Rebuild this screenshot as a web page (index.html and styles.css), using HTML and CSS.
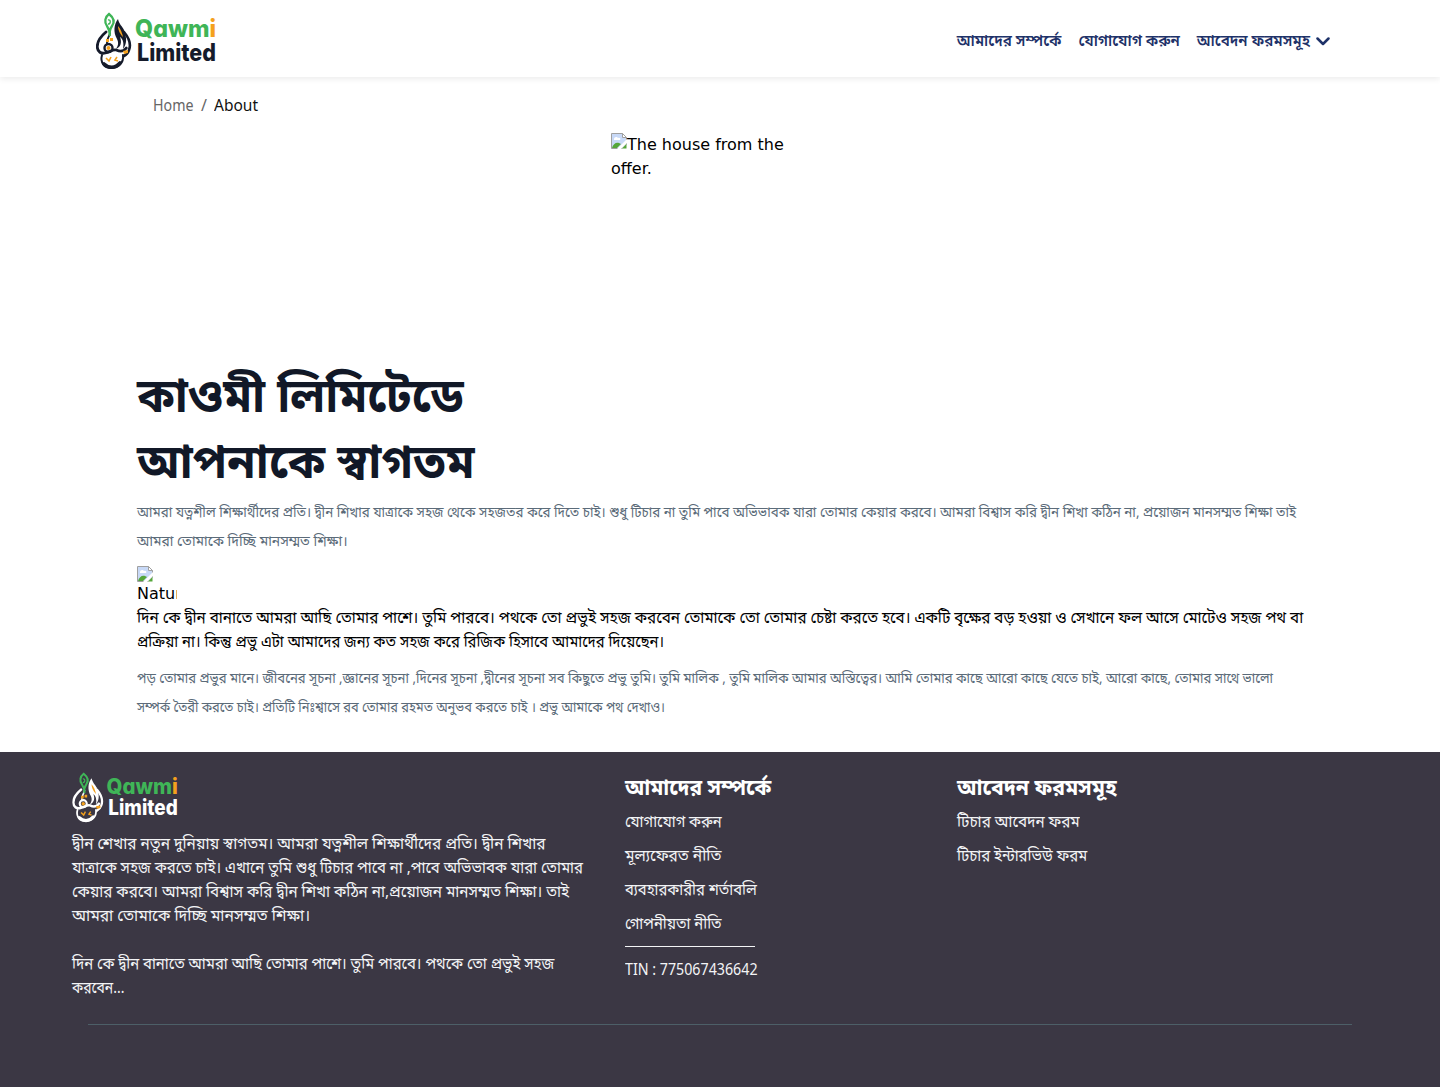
FILE: index.html
```html
<!DOCTYPE html>
<html lang="bn">
<head>
<meta charset="utf-8">
<title>About</title>
<link rel="stylesheet" href="styles.css">
</head>
<body>
<svg class="defs" aria-hidden="true">
  <symbol id="emblem" viewBox="0 0 36 58">
    <g fill="none" stroke="currentColor" stroke-linecap="round">
      <path d="M10 20C4 25 1 29 1.300 35c.2 5 4 7 8 6 5-1 7-4 11-3 4 2 7 2 10-2" stroke-width="2.800"/>
      <path d="M28 20c5 6 7 13 5 18-1 3-3 5-5 6" stroke-width="2.600"/>
      <path d="M14 21c-1 5-4 6-3 11" stroke-width="1.800"/>
      <path d="M6 43c-2 7 2 13 9 13s13-5 12-13" stroke-width="2"/>
      <path d="M8 52c4 4 11 5 16-1" stroke-width="3.600"/>
      <circle cx="12.500" cy="36" r="4" stroke-width="2.400"/>
    </g>
    <path d="M22 7c-4 5-5 13-1 20 2 4 1 7-1 10 5-2 6-7 4-12 3 2 4 6 3 12 4-5 4-12 1-17V18c-2-4-5-6-6-11z" fill="currentColor"/>
    <path d="M22 14c0 5 3 9 5 11-1-4-2-8-5-11z" fill="#f4a11d"/>
    <path d="M14 24c0-4-1-7-3-10-3-4-2-9 2-12 5 4 6 8 3 12-2 3-3 6-2 10z" fill="none" stroke="#3fb557" stroke-width="2.300"/>
    <path d="M12 8c3-1 3 4 0 4" fill="none" stroke="#3fb557" stroke-width="1.400"/>
    <path d="M10 27h3v3h-3zm4-1h3v3h-3zM27 39l5-1v3l-4 1z" fill="#f4a11d"/>
    <circle cx="12.500" cy="36" r="2" fill="#f4a11d"/>
    <path d="M10 46l3 3 2-4M21 45l-2 3 3 1" fill="none" stroke="#f4a11d" stroke-width="1.600"/>
  </symbol>
  <symbol id="broken" viewBox="0 0 16 16">
    <path d="M.5.500h11l4 4V11L11 15.500H.5z" fill="#c8d9f7" stroke="#a0a0a0"/>
    <path d="M3 6c0-2 3-3 4-1 2-1 3 1 2 2H3z" fill="#fff"/>
    <path d="M1 15c1-4 4-6 7-5l2 1-4 4z" fill="#55a63a"/>
    <path d="M16 6v4l-6 6H6z" fill="#fff"/>
    <path d="M11.500.500v4h4z" fill="#fff" stroke="#a0a0a0"/>
    <path d="M11 15.500h4.500V11z" fill="#55a63a"/>
  </symbol>
</svg>
<header class="header">
  <svg class="logo" viewBox="0 0 120 58">
    <use href="#emblem" width="36" height="58"/>
    <text x="39" y="25" class="logo-top" textLength="81" lengthAdjust="spacingAndGlyphs">Qawm<tspan class="accent">i</tspan></text>
    <text x="41" y="49" class="logo-bottom" textLength="79" lengthAdjust="spacingAndGlyphs">Limited</text>
  </svg>
  <nav class="nav">
    <a>আমাদের সম্পর্কে</a><a>যোগাযোগ করুন</a><a>আবেদন ফরমসমূহ</a>
    <svg class="chevron" viewBox="0 0 14 9"><path d="M1.500 1.500 7 7l5.500-5.500"/></svg>
  </nav>
</header>
<div class="crumbs"><span class="home line w89">Home</span><span class="slash">/</span><b class="line w97">About</b></div>
<main class="main">
  <div class="hero"><svg class="broken"><use href="#broken"/></svg>The house from the offer.</div>
  <h1 class="title"><span class="line w965">কাওমী লিমিটেডে</span><span class="line w965">আপনাকে স্বাগতম</span></h1>
  <p class="muted"><span class="line w955">আমরা যত্নশীল শিক্ষার্থীদের প্রতি। দ্বীন শিখার যাত্রাকে সহজ থেকে সহজতর করে দিতে চাই। শুধু টিচার না তুমি পাবে অভিভাবক যারা তোমার কেয়ার করবে। আমরা বিশ্বাস করি দ্বীন শিখা কঠিন না, প্রয়োজন মানসম্মত শিক্ষা তাই</span><span class="line w99">আমরা তোমাকে দিচ্ছি মানসম্মত শিক্ষা।</span></p>
  <div class="avatar"><svg class="broken"><use href="#broken"/></svg><span>Nature</span></div>
  <p class="body"><span class="line w953">দিন কে দ্বীন বানাতে আমরা আছি তোমার পাশে। তুমি পারবে। পথকে তো প্রভুই সহজ করবেন তোমাকে তো তোমার চেষ্টা করতে হবে। একটি বৃক্ষের বড় হওয়া ও সেখানে ফল আসে মোটেও সহজ পথ বা</span><span class="line w926">প্রক্রিয়া না। কিন্তু প্রভু এটা আমাদের জন্য কত সহজ করে রিজিক হিসাবে আমাদের দিয়েছেন।</span></p>
  <p class="muted"><span class="line w938">পড় তোমার প্রভুর মানে। জীবনের সূচনা ,জ্ঞানের সূচনা ,দিনের সূচনা ,দ্বীনের সূচনা সব কিছুতে প্রভু তুমি। তুমি মালিক , তুমি মালিক আমার অস্তিত্বের। আমি তোমার কাছে আরো কাছে যেতে চাই, আরো কাছে, তোমার সাথে ভালো</span><span class="line w918">সম্পর্ক তৈরী করতে চাই। প্রতিটি নিঃশ্বাসে রব তোমার রহমত অনুভব করতে চাই । প্রভু আমাকে পথ দেখাও।</span></p>
</main>
<footer class="footer">
  <div class="columns">
    <section class="about">
      <svg class="logo small" viewBox="0 0 120 58">
        <use href="#emblem" width="36" height="58"/>
        <text x="39" y="25" class="logo-top" textLength="81" lengthAdjust="spacingAndGlyphs">Qawm<tspan class="accent">i</tspan></text>
        <text x="41" y="49" class="logo-bottom" textLength="79" lengthAdjust="spacingAndGlyphs">Limited</text>
      </svg>
      <p><span class="line w963">দ্বীন শেখার নতুন দুনিয়ায় স্বাগতম। আমরা যত্নশীল শিক্ষার্থীদের প্রতি। দ্বীন শিখার</span><span class="line w935">যাত্রাকে সহজ করতে চাই। এখানে তুমি শুধু টিচার পাবে না ,পাবে অভিভাবক যারা তোমার</span><span class="line w95">কেয়ার করবে। আমরা বিশ্বাস করি দ্বীন শিখা কঠিন না,প্রয়োজন মানসম্মত শিক্ষা। তাই</span><span class="line w98">আমরা তোমাকে দিচ্ছি মানসম্মত শিক্ষা।</span></p>
      <p><span class="line w93">দিন কে দ্বীন বানাতে আমরা আছি তোমার পাশে। তুমি পারবে। পথকে তো প্রভুই সহজ</span><span class="line w87">করবেন...</span></p>
    </section>
    <section class="links"><h2 class="line w953">আমাদের সম্পর্কে</h2><a class="line w926">যোগাযোগ করুন</a><a class="line w97">মূল্যফেরত নীতি</a><a class="line w926">ব্যবহারকারীর শর্তাবলি</a><a class="line w926">গোপনীয়তা নীতি</a><div class="tin"><span class="line w89">TIN : 775067436642</span></div></section>
    <section class="links"><h2 class="line w965">আবেদন ফরমসমূহ</h2><a class="line w953">টিচার আবেদন ফরম</a><a class="line w938">টিচার ইন্টারভিউ ফরম</a></section>
  </div>
  <div class="rule"></div>
</footer>
</body>
</html>
```
FILE: styles.css
```css
* { box-sizing: border-box; margin: 0; padding: 0; }
html { overflow-x: hidden; }
body { font: 16px/24px "Noto Sans", "Noto Sans Bengali", "Hind Siliguri", sans-serif; color: #000; background: #fff; }
.defs { display: block; width: 0; height: 0; }

/* condensed text lines */
.line { display: block; width: max-content; transform-origin: 0 50%; }
.w87 { transform: scaleX(.87); }
.w89 { transform: scaleX(.89); }
.w918 { transform: scaleX(.918); }
.w926 { transform: scaleX(.926); }
.w93 { transform: scaleX(.931); }
.w935 { transform: scaleX(.935); }
.w938 { transform: scaleX(.938); }
.w95 { transform: scaleX(.951); }
.w953 { transform: scaleX(.953); }
.w955 { transform: scaleX(.955); }
.w963 { transform: scaleX(.963); }
.w965 { transform: scaleX(.965); }
.w97 { transform: scaleX(.97); }
.w98 { transform: scaleX(.98); }
.w99 { transform: scaleX(.99); }

.header { height: 77px; padding: 12px 110px 0 96px; display: flex; justify-content: space-between; align-items: flex-start; box-shadow: 0 2px 6px rgba(0,0,0,.08); }
.logo { width: 120px; height: 58px; color: #151b2b; overflow: visible; }
.logo-top, .logo-bottom { font: 800 24px Inter, sans-serif; font-feature-settings: "cv11"; }
.logo-top { fill: #3fb557; }
.logo-bottom { fill: currentColor; }
.accent { fill: #f4a11d; }
.nav { display: flex; align-items: center; padding-top: 16px; color: #1e3269; font-size: 15.200px; font-weight: 600; white-space: nowrap; gap: 17px; }
.chevron { width: 14px; height: 9px; margin: 2px 0 0 -11px; fill: none; stroke: currentColor; stroke-width: 2.500; stroke-linecap: round; stroke-linejoin: round; }
.crumbs { display: flex; padding: 16px 153px 0; height: 56px; color: #666; }
.crumbs .home { width: 48px; }
.crumbs .slash { width: 13px; }
.crumbs b { font-weight: 400; color: #111; }
.main { padding: 0 137px; height: 619px; white-space: nowrap; }
.hero { width: 218px; height: 224px; margin: 0 auto; font-family: "DejaVu Sans", sans-serif; white-space: normal; }
.broken { width: 16px; height: 16px; vertical-align: top; }
.title { height: 140px; font-size: 48px; line-height: 66px; font-weight: 700; color: #111827; padding-top: 4px; }
.muted { font-size: 14px; line-height: 29px; color: #5b6b79; height: 69px; }
.avatar { width: 40px; height: 39px; overflow: hidden; font-family: "DejaVu Sans", sans-serif; line-height: 24px; }
.avatar .broken, .avatar span { display: block; }
.body { height: 58px; }
.footer { height: 335px; background: #3b3744; color: #f3f4f6; padding: 20px 72px 0; white-space: nowrap; }
.columns { display: grid; grid-template-columns: 553px 332px 1fr; height: 252px; }
.small { display: block; width: 106px; height: 51px; margin-bottom: 8px; color: #fff; }
.about p + p { margin-top: 24px; }
.links { display: flex; flex-direction: column; align-items: flex-start; gap: 10px; }
.links h2 { font-size: 22px; line-height: 30px; margin-top: -1px; margin-bottom: -2px; color: #fff; }
.tin { border-top: 1px solid #f3f4f6; width: 130px; margin-top: 1px; padding-top: 10px; }
.rule { margin: 0 16px; border-top: 1px solid #4d5f68; }
```
